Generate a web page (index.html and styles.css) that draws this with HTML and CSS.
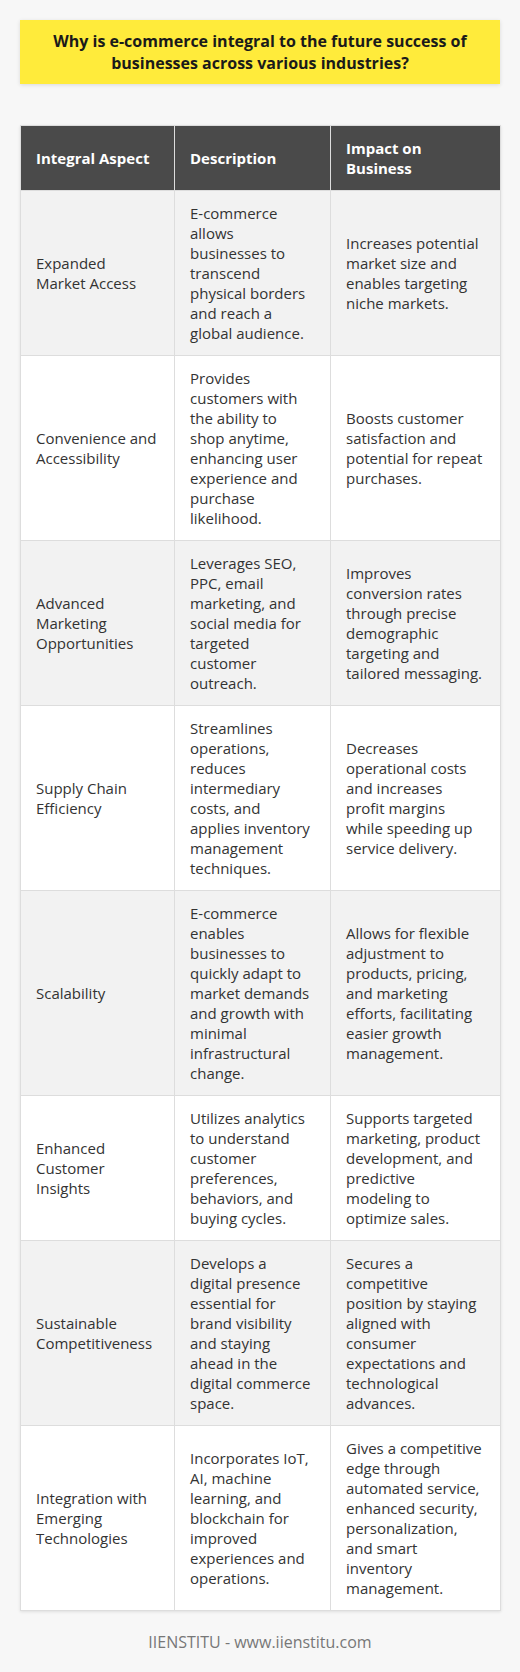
FILE: index.html
```html
<!DOCTYPE html>
<html lang="en">
<head>
<meta charset="utf-8">
<title>E-commerce</title>
<link rel="stylesheet" href="styles.css">
</head>
<body>
<div class="page">
  <h1 class="title">Why is e-commerce integral to the future success of businesses across various industries?</h1>
  <table class="grid">
    <colgroup>
      <col class="c1"><col class="c2"><col class="c3">
    </colgroup>
    <thead>
      <tr><th>Integral Aspect</th><th>Description</th><th>Impact on Business</th></tr>
    </thead>
    <tbody>
      <tr><td>Expanded Market Access</td><td>E-commerce allows businesses to transcend physical borders and reach a global audience.</td><td>Increases potential market size and enables targeting niche markets.</td></tr>
      <tr><td>Convenience and Accessibility</td><td>Provides customers with the ability to shop anytime, enhancing user experience and purchase likelihood.</td><td>Boosts customer satisfaction and potential for repeat purchases.</td></tr>
      <tr><td>Advanced Marketing Opportunities</td><td>Leverages SEO, PPC, email marketing, and social media for targeted customer outreach.</td><td>Improves conversion rates through precise demographic targeting and tailored messaging.</td></tr>
      <tr><td>Supply Chain Efficiency</td><td>Streamlines operations, reduces intermediary costs, and applies inventory management techniques.</td><td>Decreases operational costs and increases profit margins while speeding up service delivery.</td></tr>
      <tr><td>Scalability</td><td>E-commerce enables businesses to quickly adapt to market demands and growth with minimal infrastructural change.</td><td>Allows for flexible adjustment to products, pricing, and marketing efforts, facilitating easier growth management.</td></tr>
      <tr><td>Enhanced Customer Insights</td><td>Utilizes analytics to understand customer preferences, behaviors, and buying cycles.</td><td>Supports targeted marketing, product development, and predictive modeling to optimize sales.</td></tr>
      <tr><td>Sustainable Competitiveness</td><td>Develops a digital presence essential for brand visibility and staying ahead in the digital commerce space.</td><td>Secures a competitive position by staying aligned with consumer expectations and technological advances.</td></tr>
      <tr><td>Integration with Emerging Technologies</td><td>Incorporates IoT, AI, machine learning, and blockchain for improved experiences and operations.</td><td>Gives a competitive edge through automated service, enhanced security, personalization, and smart inventory management.</td></tr>
    </tbody>
  </table>
  <p class="footer">IIENSTITU - www.iienstitu.com</p>
</div>
</body>
</html>
```

FILE: styles.css
```css
html, body {
  margin: 0;
  padding: 0;
  background: #f7f7f7;
}
body {
  font-family: "Open Sans", "Liberation Sans", sans-serif;
  color: #333;
}
.page {
  padding: 20px 20px 0;
  display: flex;
  flex-direction: column;
}
.title {
  margin: 0 0 41px;
  background: #ffeb3b;
  color: #1a1a1a;
  font-size: 16px;
  font-weight: 700;
  line-height: 22px;
  text-align: center;
  padding: 10px 20px;
  box-shadow: 0 1px 4px rgba(0,0,0,0.12);
}
.grid {
  width: 480px;
  border-collapse: collapse;
  table-layout: fixed;
  background: #fff;
  box-shadow: 0 1px 3px rgba(0,0,0,0.1);
  font-size: 15px;
  line-height: 20px;
}
.c1 { width: 154px; }
.c2 { width: 156px; }
.c3 { width: 170px; }
.grid th, .grid td {
  border: 1px solid #dddddd;
  padding: 12px 15px;
  text-align: left;
  vertical-align: middle;
}
.grid td:nth-child(2) {
  padding-right: 18.5px;
}
.grid td:nth-child(3) {
  padding-right: 17.5px;
}
.grid th {
  background: #4a4a4a;
  color: #fff;
  font-weight: 700;
  font-size: 15px;
}
.grid tbody tr:nth-child(odd) td { background: #f2f2f2; }
.grid tbody tr:nth-child(even) td { background: #ffffff; }
.footer {
  margin: 20px 0 0;
  text-align: center;
  color: #777;
  font-size: 16px;
  line-height: 22px;
}
```
